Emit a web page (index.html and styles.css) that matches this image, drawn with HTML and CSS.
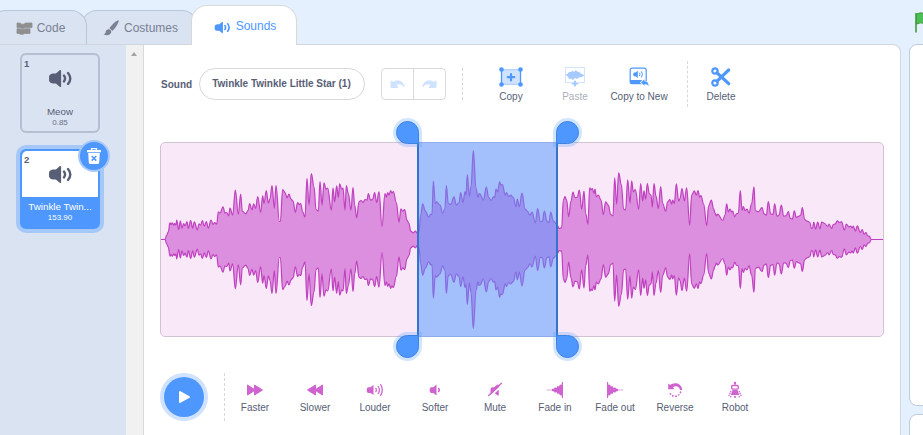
FILE: index.html
```html
<!DOCTYPE html>
<html lang="en">
<head>
<meta charset="utf-8">
<title>Sounds</title>
<link rel="stylesheet" href="styles.css">
</head>
<body>
<svg class="defs" aria-hidden="true">
  <symbol id="speaker" viewBox="0 0 24 18">
    <path d="M11.2 1.1C11.800 .5 12.600 .9 12.600 1.800V16.200C12.600 17.100 11.800 17.500 11.200 16.900L7.600 13.700H5.200C2.800 13.700 1 12.400 1 10.600V7.400C1 5.600 2.800 4.500 5.200 4.300H7.600Z"/>
    <path d="M15.300 6.200Q17.500 9 15.300 11.800M19.200 3.800Q23.600 9 19.200 14.200" fill="none" stroke="currentColor" stroke-width="2.300" stroke-linecap="round"/>
  </symbol>
</svg>
<div class="app">
  <section class="editor">
    <nav class="tabs">
      <div class="tab tab-code">
        <svg class="i-code" width="17" height="13" viewBox="0 0 17 13"><path d="M1 1H4L5.500 2.200H8L9.500 1H16V5.600H9.500L8 6.400H5.500L4 5.600H1ZM1 6.800H4L5.500 7.600H8L9.500 6.800H14V11.400H8.500L7 12.300H4.500L3 11.400H1Z" fill="#8f8f8f" stroke="#8f8f8f" stroke-linejoin="round" stroke-width=".8"/></svg>
        <span>Code</span>
      </div>
      <div class="tab tab-costumes">
        <svg width="16" height="16" viewBox="0 0 16 16" fill="#8f8f8f"><path d="M14.700 .4C15.600 .2 15.900 .9 15.600 1.800C14.400 5 11.800 8.700 9.400 10.900L6.400 8C8.500 5.200 11.600 1.600 14.700 .4Z"/><path d="M5.500 9.300C7.200 9.100 8.600 10.600 8.200 12.200C7.600 15.200 3.500 16 .5 14.300C2.600 13.900 2.500 12.800 2.800 11.500C3.100 10.200 4.200 9.400 5.500 9.300Z"/></svg>
        <span>Costumes</span>
      </div>
      <div class="tab tab-sounds">
        <svg width="17" height="13" viewBox="0 0 24 18"><use href="#speaker"/></svg>
        <span>Sounds</span>
      </div>
    </nav>
    <div class="panel">
      <aside class="list">
        <div class="item">
          <b class="num">1</b>
          <svg width="25" height="19" viewBox="0 0 24 18"><use href="#speaker"/></svg>
          <span class="name">Meow</span>
          <span class="len">0.85</span>
        </div>
        <div class="item selected">
          <b class="num">2</b>
          <div class="thumb"><svg width="25" height="19" viewBox="0 0 24 18"><use href="#speaker"/></svg></div>
          <span class="name">Twinkle Twin...</span>
          <span class="len">153.90</span>
          <div class="delete">
            <svg width="14" height="16" viewBox="0 0 14 16"><path d="M4.500 2.200V.7H9.500V2.200" fill="none" stroke="#fff" stroke-width="1.300"/><path d="M0 2H14V4.300H0ZM1.200 5H12.800L12.200 14.500Q12.100 16 10.600 16H3.400Q1.900 16 1.800 14.500Z" fill="#fff"/><path d="M4.700 8L9.300 12.600M9.300 8L4.700 12.600" stroke="#4d97ff" stroke-width="1.500"/></svg>
          </div>
        </div>
      </aside>
      <div class="scroll"><i></i></div>
      <main class="sound">
        <div class="toolbar">
          <label>Sound</label>
          <div class="field">Twinkle Twinkle Little Star (1)</div>
          <div class="history">
            <span><svg width="15" height="9" viewBox="0 0 15 9"><path d="M.5 1.200Q.5 .3 1.400 .8L3.200 2C7 -.6 12.800 .2 14.600 6.300C14.700 7 13.900 7.100 13.500 6.700C11.600 4.300 8.600 3.800 6.600 5L8 6.500Q8.600 7.800 7.400 8H1.500Q.5 8 .5 7Z"/></svg></span>
            <span><svg class="flip" width="15" height="9" viewBox="0 0 15 9"><path d="M.5 1.200Q.5 .3 1.400 .8L3.200 2C7 -.6 12.800 .2 14.600 6.300C14.700 7 13.900 7.100 13.500 6.700C11.600 4.300 8.600 3.800 6.600 5L8 6.500Q8.600 7.800 7.400 8H1.500Q.5 8 .5 7Z"/></svg></span>
          </div>
          <div class="group clip">
            <div class="tool">
              <svg width="24" height="20" viewBox="0 0 24 20"><path d="M2.500 2.500H21.500V17.500H2.500Z" fill="#cfe2ff"/><path d="M2.500 2.500V17.500M21.500 2.500V17.500" stroke="#4d97ff" stroke-width="1.300"/><path d="M2.500 2.700H21.500M2.500 17.300H21.500" stroke="#a6cbff"/><g fill="#4d97ff"><circle cx="2.500" cy="2.500" r="2.300"/><circle cx="21.500" cy="2.500" r="2.300"/><circle cx="2.500" cy="17.500" r="2.300"/><circle cx="21.500" cy="17.500" r="2.300"/></g><path d="M12 7V13.400M8.800 10.200H15.200" stroke="#4d97ff" stroke-width="2.200" stroke-linecap="round"/></svg>
              <span>Copy</span>
            </div>
            <div class="tool off">
              <svg width="20" height="20" viewBox="0 0 20 20"><path d="M.5 .5H19.500V15.500H.5Z" fill="none" stroke="#4d97ff" stroke-dasharray="1 1"/><path d="M.5 8L3 6.500L4 5H6L7.500 3.500L9 5L11 3L12.500 5L14 4.500L15.500 6.500L19.500 8L16 10.500L14 10L12.500 12L10 11L8 13L6 11.500L4 12L3 9.500Z" fill="#4d97ff"/><path d="M10 13.500V19.500M7 16.400H13" stroke="#fff" stroke-width="4"/><path d="M10 14.500V18.500M7.800 16.500H12.200" stroke="#4d97ff" stroke-width="2.200" stroke-linecap="round"/></svg>
              <span>Paste</span>
            </div>
            <div class="tool">
              <svg width="20" height="20" viewBox="0 0 20 20"><rect x="1.200" y="1.200" width="16" height="15.500" rx="2" fill="#fff" stroke="#4d97ff" stroke-width="1.200"/><path d="M1 13H17.500V15.500Q17.500 17 16 17H2.500Q1 17 1 15.500Z" fill="#4d97ff"/><path d="M8.800 3.800V11L6.500 9.300H5Q4.200 9 4.200 7.500Q4.200 5.800 5 5.500H6.500Z" fill="#4d97ff"/><path d="M10.600 6Q11.700 7.400 10.600 8.800M12.600 4.700Q14.500 7.400 12.600 10.100" fill="none" stroke="#4d97ff" stroke-linecap="round"/><path d="M12 15.500L15.500 12.200V14.200Q19.600 14.200 19.600 19Q18.500 17 15.500 17V18.700Z" fill="#4d97ff" stroke="#fff" stroke-width="1.600" stroke-linejoin="round" paint-order="stroke"/></svg>
              <span>Copy to New</span>
            </div>
          </div>
          <div class="group cut">
            <div class="tool">
              <svg width="20" height="20" viewBox="0 0 20 20"><g fill="none" stroke="#4d97ff"><circle cx="4" cy="4" r="2.700" stroke-width="2.200"/><circle cx="4" cy="16" r="2.700" stroke-width="2.200"/><path d="M6 5.800L17.700 16.700" stroke-width="3.200" stroke-linecap="round"/><path d="M6 14.200L9 11.300M11.500 8.800L17.700 3" stroke-width="3.200" stroke-linecap="round"/></g></svg>
              <span>Delete</span>
            </div>
          </div>
        </div>
        <div class="wave">
          <svg width="722" height="193" viewBox="3 0 2166 579"><path id="waveform"/></svg>
          <div class="selection"><i class="h tl"></i><i class="h tr"></i><i class="h bl"></i><i class="h br"></i></div>
        </div>
        <div class="effects">
          <div class="play"><svg width="13" height="14" viewBox="0 0 13 14"><path d="M2 2V12L11 7Z" fill="#fff" stroke="#fff" stroke-width="2" stroke-linejoin="round"/></svg></div>
          <div class="fx-list">
            <div class="fx"><svg width="20" height="18" viewBox="0 0 20 18"><path d="M2.500 4L9.500 8.500V4L17.500 9L9.500 14V9.500L2.500 14Z" stroke="#cf63cf" stroke-linejoin="round"/></svg><span>Faster</span></div>
            <div class="fx"><svg width="20" height="18" viewBox="0 0 20 18"><path d="M17.500 4L10.500 8.500V4L2.500 9L10.500 14V9.500L17.500 14Z" stroke="#cf63cf" stroke-linejoin="round"/></svg><span>Slower</span></div>
            <div class="fx"><svg width="20" height="18" viewBox="0 0 20 18"><path d="M8.500 4V14L5.500 12H3.500Q1.800 12 1.800 10.300V8Q1.800 6.300 3.500 6.300H5.500Z"/><path d="M10.900 7.400Q12 9 10.900 10.600M13.200 5.500Q15.600 9 13.200 12.500M15.600 3.500Q19 9 15.600 14.500" fill="none" stroke="#cf63cf" stroke-width="1.300" stroke-linecap="round"/></svg><span>Louder</span></div>
            <div class="fx"><svg width="20" height="18" viewBox="0 0 20 18"><path d="M11.500 3.500V14.500L8.300 12H6.500Q4.700 12 4.700 10.300V8Q4.700 6.300 6.500 6.300H8.300Z"/><path d="M13.600 7.500Q15 9 13.600 10.500" fill="none" stroke="#cf63cf" stroke-width="1.500" stroke-linecap="round"/></svg><span>Softer</span></div>
            <div class="fx"><svg width="20" height="18" viewBox="0 0 20 18"><path d="M5.500 11.500V8Q5.500 6.500 7.500 6.300H9L12.500 3.500L14 4V6L6.500 13ZM13.800 8.500V14Q13.500 15 12 14L9.800 12.300Z"/><path d="M3.700 14.500L16.400 2.200" stroke="#cf63cf" stroke-width="1.400" stroke-linecap="round"/></svg><span>Mute</span></div>
            <div class="fx"><svg width="20" height="18" viewBox="0 0 20 18"><path d="M1.500 9H8" stroke="#e9b8e9" stroke-width="1.200"/><path d="M7 8L9 7.500L10 6.300L11.500 7L12.500 5L14 5.500L15 3.500L16.500 4L17 1H18V17H17L16.500 14L15 14.500L14 12.500L12.500 13L11.500 11L10 11.700L9 10.500L7 10Z"/></svg><span>Fade in</span></div>
            <div class="fx"><svg width="20" height="18" viewBox="0 0 20 18"><path d="M18.500 9H12" stroke="#e9b8e9" stroke-width="1.200"/><path d="M13 8L11 7.500L10 6.300L8.500 7L7.500 5L6 5.500L5 3.500L3.500 4L3 1H2V17H3L3.500 14L5 14.500L6 12.500L7.500 13L8.500 11L10 11.700L11 10.500L13 10Z"/></svg><span>Fade out</span></div>
            <div class="fx"><svg width="20" height="18" viewBox="0 0 20 18"><path d="M3.200 2.500L5.200 4.100C8.500 1 15.500 1.300 17 7.500V9H15C14.500 5.500 10.500 4.300 8 6.300L9.300 8.300H3.200Z"/><path d="M15.800 10.500Q14.500 15.200 10 15.200Q6.800 15.200 4.800 12.200" fill="none" stroke="#cf63cf" stroke-width="1.500" stroke-dasharray="1.600 1.500"/></svg><span>Reverse</span></div>
            <div class="fx"><svg width="20" height="18" viewBox="0 0 20 18"><circle cx="10" cy="1.900" r="1.200"/><path d="M9.400 2H10.600V4H9.400Z"/><rect x="6.700" y="4.500" width="6.600" height="3.600" rx="1" fill="#fff" stroke="#cf63cf" stroke-width="1.400"/><path d="M7.500 9H12.500L14.200 14H5.800Z"/><path d="M6 10L3.500 15.500M14 10L16.500 15.500M6 15L5.500 16.500M14 15L14.500 16.500" stroke="#cf63cf" stroke-width="1.200" stroke-dasharray="1.500 .5"/><circle cx="10" cy="16" r="1.100"/></svg><span>Robot</span></div>
          </div>
        </div>
      </main>
    </div>
  </section>
  <section class="stage">
    <header><svg width="18" height="22" viewBox="0 0 18 22"><path d="M1.500 2Q6 -.5 10 2T18 2V12Q14 14.500 10 12T1.500 12Z" fill="#4cbf56" stroke="#45993d"/><path d="M1 1V20.500" stroke="#45993d" stroke-width="1.600"/></svg></header>
    <div class="box view"></div>
    <div class="box sprites"></div>
  </section>
</div>
<script src="wave.js"></script>
</body>
</html>
```
FILE: styles.css
```css
* { box-sizing: border-box; }
body { margin: 0; font-family: "Liberation Sans", Arial, sans-serif; color: #575e75; background: #e5f0ff; }
svg { display: block; flex: none; fill: currentColor; }
.defs { position: absolute; width: 0; height: 0; }
.app { width: 923px; height: 435px; overflow: hidden; display: flex; gap: 8px; }
.editor { width: 901px; flex: none; display: flex; flex-direction: column; }

.tabs { height: 44px; flex: none; display: flex; align-items: flex-end; }
.tab { height: 34px; border: 1px solid #b9c5d9; border-bottom: 0; border-radius: 16px 16px 0 0; background: #d9e3f2; display: flex; align-items: center; justify-content: center; font-size: 12px; color: #7a8193; }
.tab-code { width: 97px; margin-left: -10px; z-index: 2; position: relative; gap: 4px; padding-left: 4px; }
.i-code { margin-top: 1px; }
.tab-costumes { width: 117px; margin-left: -6px; gap: 5px; padding-left: 2px; position: relative; z-index: 1; }
.tab-sounds { width: 106px; height: 40px; margin: 0 0 -1px -7px; background: #fff; color: #4d97ff; border-color: #d9d9d9; position: relative; z-index: 3; gap: 5px; padding-top: 1px; padding-left: 2px; }
.tab-sounds svg { margin-top: 3px; }

.panel { height: 420px; flex: none; display: flex; background: #fff; border: 1px solid #d0d5de; border-left: 0; border-radius: 0 8px 0 0; }
.list { width: 126px; background: #d9e3f2; padding: 8px 0 0 20px; display: flex; flex-direction: column; gap: 16px; }
.item { width: 80px; height: 80px; flex: none; border: 2px solid #b5bfd0; border-radius: 6px; position: relative; display: flex; flex-direction: column; align-items: center; padding-top: 14px; }
.num { position: absolute; top: 4px; left: 2px; font-size: 9.500px; line-height: 10px; }
.name { font-size: 9.800px; line-height: 12px; margin-top: 18px; white-space: nowrap; }
.len { font-size: 8px; line-height: 10px; opacity: .85; }
.selected { background: #4d97ff; border-color: #4d97ff; box-shadow: 0 0 0 4px #a6c8f8; padding: 0; color: #fff; }
.selected .num, .selected .thumb { color: #575e75; }
.thumb { width: 76px; height: 46px; background: #fff; border-radius: 5px 5px 0 0; display: flex; align-items: center; justify-content: center; }
.selected .name { margin-top: 4px; }
.selected .len { opacity: 1; }
.delete { position: absolute; top: -9px; right: -10px; width: 28px; height: 28px; border-radius: 50%; background: #4d97ff; box-shadow: 0 0 0 2px #a6c8f8; display: flex; align-items: center; justify-content: center; }
.scroll { width: 18px; background: #f1f1f1; border-right: 1px solid #d9d9d9; padding: 7px 0 0 5px; }
.scroll i { display: block; width: 0; border: 3.500px solid transparent; border-top: 0; border-bottom: 4px solid #a3a3a3; }

.sound { flex: 1; padding: 0 16px; }
.toolbar { height: 97px; display: flex; align-items: center; padding-bottom: 19px; padding-left: 1px; font-size: 10px; }
label { font-weight: bold; width: 38px; }
.field { width: 166px; height: 32px; border: 1px solid #d9d9d9; border-radius: 16px; font-weight: bold; line-height: 30px; text-align: center; white-space: nowrap; padding-right: 1px; }
.history { width: 65px; height: 32px; margin-left: 16px; border: 1px solid #d9d9d9; border-radius: 4px; display: flex; color: #cfe2ff; }
.history span { flex: 1; display: flex; align-items: center; justify-content: center; }
.history span + span { border-left: 1px solid #d9d9d9; }
.flip { transform: scaleX(-1); }
.group { display: flex; align-items: center; }
.clip { width: 225px; height: 32px; margin-left: 16px; border-left: 1px dashed #d9d9d9; padding-left: 16px; }
.cut { height: 46px; border-left: 1px dashed #d9d9d9; }
.tool { width: 64px; display: flex; flex-direction: column; align-items: center; gap: 4px; padding-top: 2px; white-space: nowrap; line-height: 12px; }
.off { opacity: .5; }
.cut .tool { width: 66px; }

.wave { width: 724px; height: 195px; border: 1px solid #d2c3d2; border-radius: 5px; background: #f8e8f8; position: relative; }
#waveform { fill: #dc8fdf; stroke: #bf41bf; stroke-width: 3.600; stroke-linejoin: round; }
.selection { position: absolute; left: 256px; top: -1px; width: 141px; height: 195px; background: rgba(77,151,255,.5); border: solid #3373cc; border-width: 0 2px; }
.h { position: absolute; width: 23px; height: 23px; background: #4d97ff; border: 1px solid #3f82df; box-shadow: 0 0 0 3px rgba(77,151,255,.25); }
.tl { left: -23px; top: -21px; border-radius: 50% 50% 0 50%; }
.tr { right: -23px; top: -21px; border-radius: 50% 50% 50% 0; }
.bl { left: -23px; bottom: -21px; border-radius: 50% 0 50% 50%; }
.br { right: -23px; bottom: -21px; border-radius: 0 50% 50% 50%; }

.effects { display: flex; align-items: center; margin-top: 36px; padding-left: 4px; height: 48px; }
.play { width: 40px; height: 40px; border-radius: 50%; background: #4d97ff; box-shadow: 0 0 0 4px #cfe2ff; display: flex; align-items: center; justify-content: center; padding-left: 1px; }
.fx-list { margin-left: 20px; border-left: 1px dashed #d9d9d9; height: 48px; display: flex; align-items: center; }
.fx { width: 60px; display: flex; flex-direction: column; align-items: center; font-size: 10px; line-height: 12px; gap: 3px; white-space: nowrap; }
.fx svg { fill: #cf63cf; }

.stage { flex: 1; display: flex; flex-direction: column; }
.stage header { height: 44px; flex: none; padding: 12px 0 0 6px; }
.box { width: 60px; flex: none; background: #fff; border: 1px solid #bfcbdd; border-radius: 8px; }
.view { height: 362px; margin-bottom: 8px; }
.sprites { height: 60px; }
```
FILE: wave.js
```js
// Turning points of the upper edge: x offset, baseline, then x,y pairs.
const segments = [
  [-30, 313, "33,313 45,313 50,300 55,290 60,263 63,268 67,263 71,270 74,265 78,270 80,255 86,283 91,258 96,279 101,265 105,272 111,260 115,280 122,256 128,279 133,260 142,284 147,266 152,270 157,256 163,273 169,259 175,279 183,255 189,268 194,262 200,267 205,230 210,234 219,215 225,234 230,232 236,242 240,219 248,240 256,165 265,238 272,177 277,228 287,236 294,226 299,205 306,224 311,206 317,220 323,184 332,231 338,182 342,205 349,166 355,204 360,190 366,151 373,220 378,151 388,259 391,259 398,163"],
  [375, 373, "0,232 6,248 12,237 18,252 24,258 31,291 38,262 42,268 47,265 53,290 60,306 66,190 72,270 79,175 87,215 93,283 100,288 105,199 111,270 117,203 123,222 128,219 139,285 144,219 149,260 155,212 160,247 164,206 170,222 174,219 180,286 184,211 190,235 198,285 204,217 209,270 215,308 222,260 228,256 234,262 240,253 246,255 250,235 257,255 263,252 269,232 275,262 282,230 291,334 300,235 304,246 308,232 312,240 317,226 321,234 325,229 334,262 342,321 348,281 353,288 359,283 366,315 372,325 377,348 385,353 391,348 397,355"],
  [750, 373, "27,350 32,300 38,266 46,287 56,306 62,297 66,298 70,198 76,265 80,260 90,270 98,294 105,280 109,211 115,265 122,268 132,245 139,270 147,262 152,232 159,262 165,229 168,240 172,178 178,243 183,215 190,106 198,220 204,247 207,235 210,236 220,255 229,216 236,247 244,256 250,245 254,247 258,222 263,230 269,200 273,210 277,208 286,240 289,232 296,244 302,240 310,247 318,275 322,252 328,275 336,234 345,281 352,288 360,300 366,291 376,323 383,280 391,320 397,318 403,288 411,318 417,322 422,291 430,317 438,325"],
  [1185, 313, "8,272 12,280 20,278 25,195 30,184 35,195 41,245 48,198 54,171 60,188 67,186 73,165 80,222 87,168 92,235 99,267 104,158 108,164 112,160 117,175 120,162 124,185 130,180 138,195 145,238 152,200 160,210 167,238 174,242 179,128 185,207 191,113 199,148 206,223 212,224 218,134 225,204 230,137 235,170 241,163 251,222 257,145 263,197 267,167 272,192 277,145 283,176 288,180 292,216 297,145 303,183 310,220 317,154 323,205 332,228 338,200 345,193 350,207 353,195 358,205 364,146 371,198 375,190 381,160 388,197 395,158 404,270 410,180 418,167 424,180 429,166 434,186 438,181 446,207 455,271 461,212 469,195 476,222"],
  [1665, 313, "0,233 4,242 8,237 23,256 30,240 35,206 40,230 45,222 50,230 53,228 59,245 65,235 70,235 76,166 81,226 85,214 90,226 96,222 102,234 110,205 117,155 121,226 130,230 141,217 147,236 154,240 160,199 167,236 174,238 179,206 186,243 192,240 199,210 206,243 213,242 220,229 226,250 232,252 238,227 244,247 252,243 257,240 262,217 269,253 276,258 285,262 289,280 293,278 296,261 302,282 308,261 315,281 320,261 329,265 338,274 342,267 350,280 355,268 361,266 367,257 373,262 380,260 388,285 394,267 402,275 407,273 411,278 415,273 421,288 427,272 436,292 442,283 447,297 453,292 458,302 463,303 469,313 504,313"]
];
const mid = 289.5;
const pts = segments.flatMap(([dx, base, s]) => s.split(" ").map(p => {
  const [x, y] = p.split(",").map(Number);
  return [x + dx, base - y];
}));

// Each stretch between two turning points eases in and out horizontally.
function edge(list, sign) {
  let d = "";
  for (let i = 1; i < list.length; i++) {
    const [x0, a0] = list[i - 1], [x1, a1] = list[i];
    const c = (x1 - x0) * 0.4;
    d += `C${x0 + c} ${mid + sign * a0} ${x1 - c} ${mid + sign * a1} ${x1} ${mid + sign * a1}`;
  }
  return d;
}
document.getElementById("waveform").setAttribute("d",
  `M${pts[0][0]} ${mid}` + edge(pts, -1) + edge([...pts].reverse(), 1) + "Z");
```
